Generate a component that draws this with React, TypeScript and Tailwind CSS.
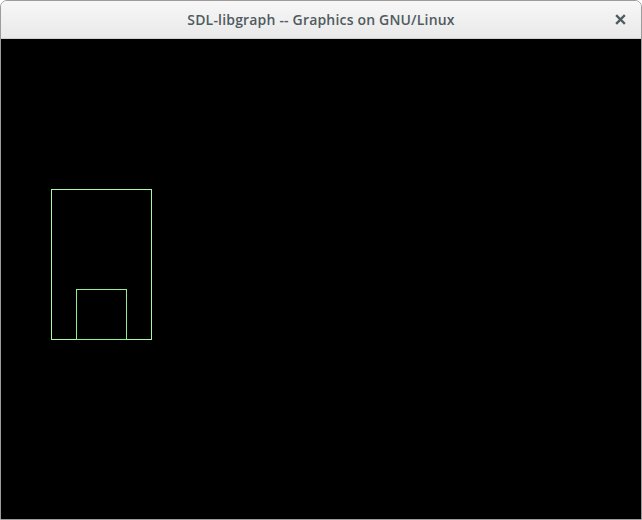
export default function App() {
  return (
    <div className="w-[642px] h-[520px] bg-white">
      <div className="flex flex-col w-full h-full rounded-t-[7px] border border-[#9c9c9c] overflow-hidden">
        <div className="relative flex items-center justify-center h-[38px] shrink-0 bg-gradient-to-b from-[#f7f7f7] to-[#e9e9e9] border-b border-[#d0d0d0]">
          <span
            className="text-[14px] font-semibold tracking-[0.18px] text-[#4f5b60]"
            style={{ fontFamily: '"Open Sans", "DejaVu Sans", sans-serif' }}
          >
            SDL-libgraph -- Graphics on GNU/Linux
          </span>
          <div className="absolute right-[15px] top-[13px]">
            <svg width="11" height="11" viewBox="0 0 11 11">
              <path d="M2 2 L9 9 M9 2 L2 9" stroke="#4f5b60" strokeWidth="2.4" strokeLinecap="square" />
            </svg>
          </div>
        </div>
        <div className="flex-1 bg-black">
          <svg width="640" height="480" viewBox="0 0 640 480" className="block">
            <rect x="50.5" y="150.5" width="100" height="150" fill="none" stroke="#a8f8a8" strokeWidth="1" />
            <rect x="75.5" y="250.5" width="50" height="50" fill="none" stroke="#90ee90" strokeWidth="1" />
          </svg>
        </div>
      </div>
    </div>
  );
}
